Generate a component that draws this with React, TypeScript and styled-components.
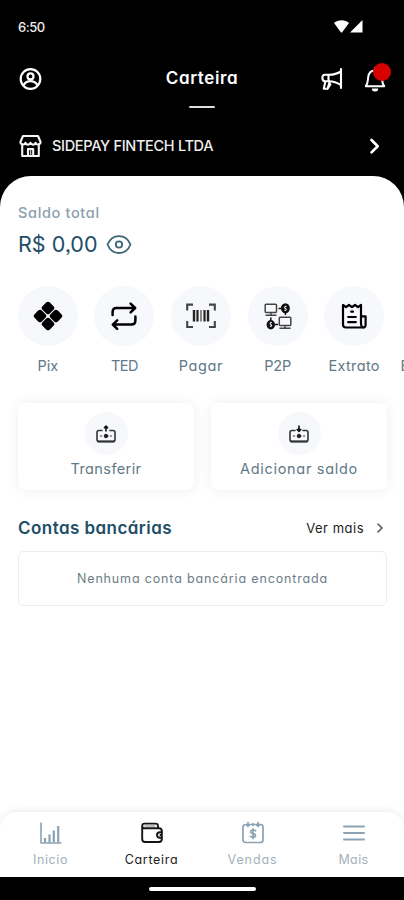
import React from "react";
import styled, { createGlobalStyle } from "styled-components";

const GlobalStyle = createGlobalStyle`
  * { box-sizing: border-box; }
  body {
    margin: 0;
    background: #000;
    font-family: Inter, "Open Sans", sans-serif;
    font-feature-settings: "cv11" 1, "ss03" 1;
  }
`;

const Screen = styled.div`
  width: 404px;
  height: 900px;
  overflow: hidden;
  display: flex;
  flex-direction: column;
  background: #000;
`;

const Text = styled.span<{ $size: number; $color: string; $weight?: number; $track?: number; $line?: number }>`
  display: block;
  white-space: nowrap;
  font-size: ${(p) => p.$size}px;
  font-weight: ${(p) => p.$weight ?? 400};
  color: ${(p) => p.$color};
  letter-spacing: ${(p) => p.$track ?? 0}px;
  line-height: ${(p) => p.$line ?? 20}px;
`;

const StatusBar = styled.div`
  height: 54px;
  flex: none;
  padding: 0 41px 0 18px;
  display: flex;
  align-items: center;
  justify-content: space-between;
  svg { display: block; margin-top: -2px; }
`;

const TopBar = styled.header`
  height: 62px;
  flex: none;
  padding: 12px 18px 0 18px;
  display: grid;
  grid-template-columns: 1fr auto 1fr;
  align-items: start;
`;

const Title = styled.div`
  display: flex;
  flex-direction: column;
  align-items: center;
  &::after {
    content: "";
    width: 26px;
    height: 2px;
    margin-top: 16px;
    background: #dedede;
    border-radius: 1px;
  }
`;

const TopActions = styled.div`
  display: flex;
  justify-content: flex-end;
  gap: 21px;
`;

const BellWrap = styled.div`
  position: relative;
  height: 26px;
`;

const Badge = styled.i`
  position: absolute;
  top: -3px;
  right: -5px;
  width: 18px;
  height: 18px;
  border-radius: 50%;
  background: #d90000;
`;

const StoreRow = styled.div`
  height: 60px;
  flex: none;
  padding: 0 22px 0 18px;
  display: flex;
  align-items: center;
  gap: 9px;
  svg:last-child { margin-left: auto; }
`;

const Sheet = styled.main`
  flex: 1;
  min-height: 0;
  display: flex;
  flex-direction: column;
  background: #fff;
  border-radius: 31px 31px 0 0;
  padding-top: 27px;
`;

const Balance = styled.section`
  height: 83px;
  flex: none;
  padding-left: 18px;
`;

const Amount = styled.div`
  margin-top: 6px;
  display: flex;
  align-items: center;
  gap: 9px;
`;

const Shortcuts = styled.section`
  display: flex;
  flex: none;
  height: 117px;
  padding-left: 9.5px;
  overflow: hidden;
`;

const Shortcut = styled.div`
  width: 76.6px;
  flex: none;
  display: flex;
  flex-direction: column;
  align-items: center;
  gap: 10px;
`;

const NextShortcut = styled.div`
  flex: none;
  padding: 70px 0 0 8px;
`;

const Bubble = styled.div<{ $size: number }>`
  width: ${(p) => p.$size}px;
  height: ${(p) => p.$size}px;
  border-radius: 50%;
  background: #f7f8fb;
  display: flex;
  align-items: center;
  justify-content: center;
`;

const Cards = styled.section`
  flex: none;
  display: grid;
  grid-template-columns: 1fr 1fr;
  gap: 17px;
  padding: 0 17px 0 18px;
`;

const Card = styled.div`
  height: 87px;
  border-radius: 7px;
  background: #fff;
  box-shadow: 0 0 14px rgba(0, 0, 0, 0.07);
  padding-top: 9px;
  display: flex;
  flex-direction: column;
  align-items: center;
  gap: 4px;
`;

const SectionHead = styled.div`
  margin-top: 27px;
  padding: 0 19px 0 18px;
  display: flex;
  align-items: center;
`;

const More = styled.div`
  margin-left: auto;
  display: flex;
  align-items: center;
  gap: 11px;
`;

const EmptyBox = styled.div`
  height: 55px;
  margin: 12px 17px 0 18px;
  border: 1px solid #e9edef;
  border-radius: 6px;
  display: flex;
  align-items: center;
  justify-content: center;
`;

const Nav = styled.nav`
  margin-top: auto;
  flex: none;
  height: 65px;
  background: #fff;
  border-radius: 17px 17px 0 0;
  box-shadow: 0 -2px 6px rgba(0, 0, 0, 0.07);
  clip-path: inset(-12px 0 0 0);
  display: grid;
  grid-template-columns: repeat(4, 1fr);
`;

const Tab = styled.div`
  padding-top: 9px;
  display: flex;
  flex-direction: column;
  align-items: center;
  gap: 5px;
`;

const Gesture = styled.footer`
  height: 23px;
  flex: none;
  display: flex;
  justify-content: center;
  padding-top: 10px;
  &::before {
    content: "";
    width: 107px;
    height: 4px;
    border-radius: 2px;
    background: #fff;
  }
`;

type IconProps = { w?: number; h?: number; box?: string; color?: string; sw?: number; children: React.ReactNode };
const Icon = ({ w = 24, h = w, box = `0 0 ${w} ${h}`, color = "#000", sw = 2, children }: IconProps) => (
  <svg width={w} height={h} viewBox={box} fill="none" stroke={color} strokeWidth={sw} strokeLinecap="round" strokeLinejoin="round">
    {children}
  </svg>
);

const SignalIcons = () => (
  <svg width="29" height="14" viewBox="0 0 29 14" fill="#fff">
    <path d="M0 4C4 .2 11 .2 15 4L8 13.5H7Z" />
    <path d="M28.5 1V13.5H16Z" />
  </svg>
);

const UserIcon = () => (
  <Icon w={24} h={26} color="#fff" sw={2.2}>
    <circle cx="12.5" cy="13" r="9.8" />
    <circle cx="12.5" cy="10.4" r="3" />
    <path d="M5.8 18.8C7.5 16.2 9.5 15.2 12.5 15.2S17.5 16.2 19.2 18.8" />
  </Icon>
);

const MegaphoneIcon = () => (
  <Icon w={22} h={26} color="#fff" sw={2.1}>
    <path d="M20 3V22" />
    <path d="M20 5.5C16 8 13 8.8 8 8.8H4C1.8 8.8 1.4 10.4 1.4 12S2 15.2 4 15.2H8C13 15.2 16 16.5 20 19" />
    <path d="M7.5 9V15M4.3 15.5L2.8 22.8H6.6L8.6 15.8M6.6 22.8L9.4 18.2" />
  </Icon>
);

const BellIcon = () => (
  <Icon w={22} h={26} color="#fff" sw={2}>
    <path d="M1.8 20.2C4 17.5 3.8 15 4.2 11C4.7 6.5 7 4.4 11 4.4S17.4 6.5 17.8 11C18.2 15 18 17.5 20.2 20.2Z" />
    <path d="M11 4V2" />
    <path d="M8.8 23.4C9.6 24.8 12.4 24.8 13.2 23.4Z" fill="#fff" />
  </Icon>
);

const StoreIcon = () => (
  <Icon w={25} h={24} color="#f4f4f4" sw={2.1}>
    <path d="M5 2H20L22.6 8C22.6 10.8 18.4 11.4 17.6 8.7C17 11.2 13.2 11.2 12.5 8.7C11.8 11.2 8 11.2 7.4 8.7C6.6 11.4 2.4 10.8 2.4 8Z" />
    <path d="M4.2 11.5V22H20.8V11.5M10 22V15H15.2V22" />
    <path d="M12.6 16V21" strokeWidth="1.4" stroke="#bbb" />
  </Icon>
);

const PixIcon = () => (
  <svg width="30" height="30" viewBox="0 0 30 30" fill="#000">
    <g transform="rotate(45 15 15)">
      <rect x="4.2" y="4.2" width="10.3" height="10.3" rx="2.6" />
      <rect x="15.5" y="4.2" width="10.3" height="10.3" rx="2.6" />
      <rect x="4.2" y="15.5" width="10.3" height="10.3" rx="2.6" />
      <rect x="15.5" y="15.5" width="10.3" height="10.3" rx="2.6" />
    </g>
  </svg>
);

const RepeatIcon = () => (
  <Icon w={26} h={30} sw={2.5}>
    <path d="M1.6 14V11.2C1.6 8.2 2.9 7 5.4 7H23.6M19.6 2.7L24.2 7L19.6 11.3" />
    <path d="M24.4 15.5V19.3C24.4 22.5 23 23.6 20.5 23.6H2.2M6.2 19.3L1.8 23.6L6.2 27.9" />
  </Icon>
);

const BarcodeIcon = () => (
  <svg width="30" height="26" viewBox="0 0 30 26" fill="none" stroke="#222">
    <path d="M7 1.6H1.2V7.5M23 1.6H28.8V7.5M7 24H1.2V18M23 24H28.8V18" strokeWidth="2.1" stroke="#444" />
    <path d="M8 7V18.5M22 7V18.5" strokeWidth="2.4" />
    <path d="M11.5 7V18.5M18.5 7V18.5" strokeWidth="2.2" />
    <path d="M15 7V18.5" strokeWidth="2" stroke="#888" />
  </svg>
);

const PeerIcon = () => (
  <svg width="28" height="28" viewBox="0 0 28 28" fill="none" stroke="#444" strokeWidth="1.5">
    <rect x="1.2" y="2.2" width="11.3" height="8.2" rx=".8" />
    <path d="M7 10.6V13M1.5 13.2H12.5" />
    <rect x="15.3" y="15.2" width="11.5" height="8.2" rx=".8" />
    <path d="M21 23.6V26M15.5 26.2H26.5" />
    <ellipse cx="21.4" cy="6.3" rx="3.7" ry="4.3" fill="#111" stroke="#111" />
    <ellipse cx="6.8" cy="22.7" rx="3.5" ry="4" fill="#111" stroke="#111" />
    <path d="M14.5 6.5H17M11 22.5H14M6.8 18V15.5M21.4 11V13" stroke="#111" />
    <path d="M22.5 4.5C20.5 4 20.2 6.2 21.4 6.5S22.8 8.8 20.5 8.3M7.8 20.5C6 20 5.7 22.1 6.8 22.5S8.2 24.8 5.9 24.3" stroke="#eee" strokeWidth="1.1" />
  </svg>
);

const ReceiptIcon = () => (
  <Icon w={26} h={28} sw={2.2}>
    <path d="M2 3L5 5.2L8 3L11 5.2L14 3L17 5.2L20 3V21C20 24 21 25.5 22.5 25.5H5C3 25.5 2 24.2 2 22.5Z" />
    <path d="M20 14.3H24.6V22.5C24.6 24.5 24 25.5 22.5 25.5" />
    <path d="M10.2 9.7H12M7.2 15H14.8M7.2 20.2H14.8" />
  </Icon>
);

const CashIcon = ({ down = false }: { down?: boolean }) => (
  <Icon w={20} h={20} sw={1.6} color="#333">
    <path d="M6 6.5H3C1.6 6.5 1 7.2 1 8.5V15.5C1 17 1.6 17.5 3 17.5H17C18.4 17.5 19 17 19 15.5V8.5C19 7.2 18.4 6.5 17 6.5H14" />
    <path d={down ? "M10 2V7M8.2 5.5L10 7.4L11.8 5.5Z" : "M10 7V3M8.4 3.8L10 2L11.6 3.8Z"} stroke="#111" />
    <circle cx="10" cy="12" r="1.8" fill="#222" stroke="#222" strokeWidth="1" />
    <path d="M4.5 12H5.5M14.5 12H15.5" stroke="#777" />
    <path d="M2 17.4H18" strokeWidth="2" />
  </Icon>
);

const muted = "#8ba2b3";

const ChartIcon = () => (
  <Icon w={23} h={24} color={muted} sw={1.6}>
    <path d="M2 2V22H22" />
    <path d="M6 17V21.5M10.5 13.5V21.5M14.8 9.5V21.5M19.2 5V21.5" strokeWidth="2.2" strokeLinecap="butt" />
  </Icon>
);

const WalletIcon = () => (
  <Icon w={24} h={24} sw={1.9} color="#151515">
    <path d="M2.2 5V18C2.2 20 3 21 5 21H19C21 21 21.8 20 21.8 18V10C21.8 8 21 7.2 19 7.2H4.2C2.8 7.2 2.2 6.3 2.2 5C2.2 3.3 3 2.6 4.5 2.6H15.5C17.5 2.6 18 3.3 18 5V7" />
    <path d="M21.8 11.3H20C17.8 11.3 17 12.7 17 14S17.8 16.7 20 16.7H21.8" />
    <path d="M20.4 14H20.8" strokeWidth="1.8" />
    <path d="M5 5H15" strokeWidth="1.4" stroke="#aaa" />
  </Icon>
);

const SalesIcon = () => (
  <Icon w={24} h={24} color={muted} sw={1.7}>
    <rect x="2" y="3.5" width="20" height="18" rx="2.5" />
    <path d="M7 1.5V5.5M12 2.5V4.5M17 1.5V5.5M5.8 4.2H8.2M15.8 4.2H18.2" />
    <path d="M14.6 9.8C13 8.6 9.6 8.8 9.6 10.9C9.6 13.2 14.6 12 14.6 14.5C14.6 16.6 11 16.7 9.4 15.3M12 7.7V17.7" strokeWidth="1.6" />
  </Icon>
);

const MenuIcon = () => (
  <Icon w={22} h={24} color={muted} sw={2}>
    <path d="M1 5.5H21M1 12H21M1 18.5H21" />
  </Icon>
);

const slate = "#627987";

const shortcuts = [
  { label: "Pix", icon: <PixIcon />, track: -0.1 },
  { label: "TED", icon: <RepeatIcon />, track: -0.6 },
  { label: "Pagar", icon: <BarcodeIcon />, track: 0.6 },
  { label: "P2P", icon: <PeerIcon />, track: -0.2 },
  { label: "Extrato", icon: <ReceiptIcon />, track: 0.35 },
];

const tabs = [
  { label: "Inicio", icon: <ChartIcon />, color: "#a2b1bb", track: 0.6 },
  { label: "Carteira", icon: <WalletIcon />, color: "#222", track: 0.7 },
  { label: "Vendas", icon: <SalesIcon />, color: "#a2b1bb", track: 0.9 },
  { label: "Mais", icon: <MenuIcon />, color: "#a2b1bb", track: 0.4 },
];

export default function App() {
  return (
    <Screen>
      <GlobalStyle />
      <StatusBar>
        <Text as="time" $size={13} $color="#eee" $weight={500} $track={-0.45}>6:50</Text>
        <SignalIcons />
      </StatusBar>
      <TopBar>
        <UserIcon />
        <Title>
          <Text $size={17} $color="#fff" $weight={600} $track={0.6} $line={24}>Carteira</Text>
        </Title>
        <TopActions>
          <MegaphoneIcon />
          <BellWrap>
            <BellIcon />
            <Badge />
          </BellWrap>
        </TopActions>
      </TopBar>
      <StoreRow>
        <StoreIcon />
        <Text $size={14.5} $color="#eee" $weight={500} $track={-0.31}>SIDEPAY FINTECH LTDA</Text>
        <Icon w={14} h={20} color="#fff" sw={2.7}>
          <path d="M3.5 4L9.7 10.2L3.5 16.4" />
        </Icon>
      </StoreRow>
      <Sheet>
        <Balance>
          <Text $size={14.5} $color="#8ba0ae" $weight={500} $track={0.65}>Saldo total</Text>
          <Amount>
            <Text $size={21.5} $color="#214e66" $track={0} $line={30}>R$ 0,00</Text>
            <Icon w={26} h={22} color="#3e6578" sw={1.8}>
              <path d="M1.5 11.5C6 .2 20 .2 24.5 11.5C20 22.8 6 22.8 1.5 11.5Z" />
              <circle cx="13" cy="11.5" r="3.2" />
            </Icon>
          </Amount>
        </Balance>
        <Shortcuts>
          {shortcuts.map((s) => (
            <Shortcut key={s.label}>
              <Bubble $size={60}>{s.icon}</Bubble>
              <Text $size={14.5} $color={slate} $track={s.track}>{s.label}</Text>
            </Shortcut>
          ))}
          <NextShortcut>
            <Text $size={14.5} $color={slate}>E</Text>
          </NextShortcut>
        </Shortcuts>
        <Cards>
          <Card>
            <Bubble $size={43}><CashIcon /></Bubble>
            <Text $size={14.5} $color={slate} $track={0.4}>Transferir</Text>
          </Card>
          <Card>
            <Bubble $size={43}><CashIcon down /></Bubble>
            <Text $size={14.5} $color={slate} $track={0.7}>Adicionar saldo</Text>
          </Card>
        </Cards>
        <SectionHead>
          <Text $size={17} $color="#214e66" $weight={600} $track={0.45} $line={22}>Contas bancárias</Text>
          <More>
            <Text $size={13} $color="#222" $track={0.5}>Ver mais</Text>
            <Icon w={10} h={12} color="#555" sw={1.6}>
              <path d="M3 2L7 6L3 10" />
            </Icon>
          </More>
        </SectionHead>
        <EmptyBox>
          <Text $size={12.5} $color="#6d7d87" $track={0.85}>Nenhuma conta bancária encontrada</Text>
        </EmptyBox>
        <Nav>
          {tabs.map((t) => (
            <Tab key={t.label}>
              {t.icon}
              <Text $size={12.5} $color={t.color} $track={t.track}>{t.label}</Text>
            </Tab>
          ))}
        </Nav>
      </Sheet>
      <Gesture />
    </Screen>
  );
}
